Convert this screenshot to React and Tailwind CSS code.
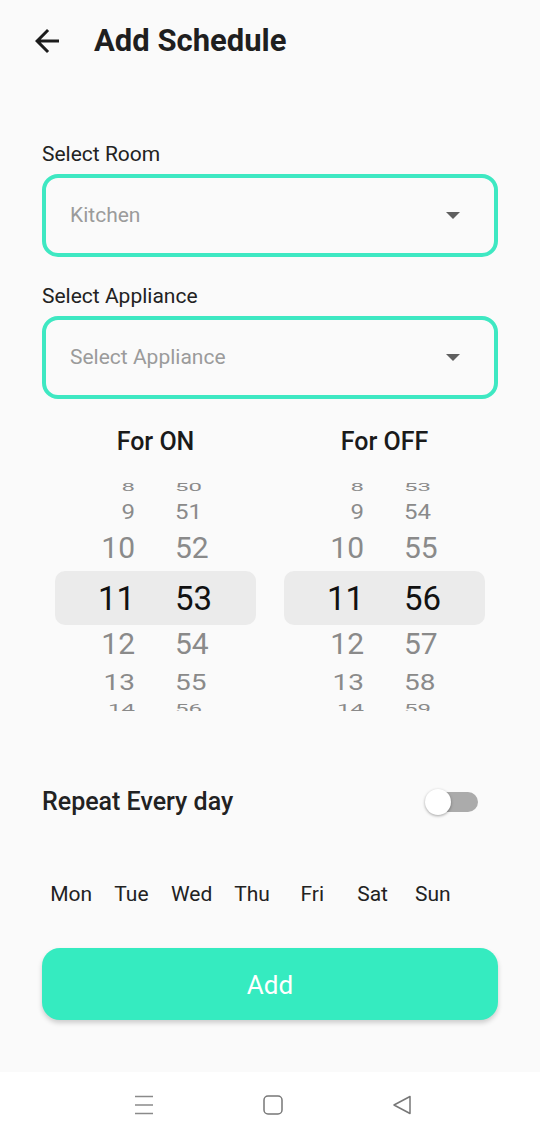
import React, { useState } from 'react';

const rows = [
  { h: 'h-[24px]', cls: 'text-[24px] scale-y-[0.47] text-[#8a8a8a]', hour: '8' },
  { h: 'h-[26px]', cls: 'text-[24px] scale-y-[0.88] text-[#8a8a8a]', hour: '9' },
  { h: 'h-[46px]', cls: 'text-[30px] text-[#8a8a8a]', hour: '10' },
  { h: 'h-[54px]', cls: 'text-[33px] text-[#111111]', hour: '11', selected: true },
  { h: 'h-[38px]', cls: 'text-[30px] text-[#8a8a8a]', hour: '12' },
  { h: 'h-[40px]', cls: 'text-[28px] scale-y-[0.8] text-[#8a8a8a]', hour: '13' },
  { h: 'h-[8px]', cls: 'text-[24px] scale-y-[0.5] origin-top text-[#8a8a8a]', hour: '14', clip: true },
];

function Wheel({ title, startMinute }) {
  return (
    <div className="w-[201px] flex flex-col">
      <div className="h-[32px] flex items-center justify-center text-[25px] font-medium text-[#1a1a1a]">
        {title}
      </div>
      <div className="mt-[17px] flex flex-col">
        {rows.map((r, i) => (
          <div
            key={i}
            className={`${r.h} flex ${r.clip ? 'items-start overflow-hidden' : 'items-center'} ${r.selected ? 'bg-[#ebebeb] rounded-[10px]' : ''}`}
          >
            <div className={`w-[80px] text-right leading-[1] ${r.cls}`}>{r.hour}</div>
            <div className={`ml-[40px] text-left leading-[1] ${r.cls}`}>{startMinute + i}</div>
          </div>
        ))}
      </div>
    </div>
  );
}

function Dropdown({ value }) {
  return (
    <div className="h-[83px] border-[4px] border-[#3ee8c2] rounded-[16px] flex items-center justify-between pl-[24px] pr-[34px]">
      <span className="text-[21px] text-[#9b9b9b]">{value}</span>
      <svg width="14" height="7" viewBox="0 0 14 7">
        <path d="M0 0 L14 0 L7 7 Z" fill="#5f5f5f" />
      </svg>
    </div>
  );
}

export default function App() {
  const [repeat, setRepeat] = useState(false);
  const days = ['Mon', 'Tue', 'Wed', 'Thu', 'Fri', 'Sat', 'Sun'];

  return (
    <div className="w-[540px] h-[1138px] bg-[#fafafa] flex flex-col" style={{ fontFamily: 'Roboto, "Noto Sans", sans-serif' }}>
      <div className="h-[1072px] flex flex-col">
        {/* header */}
        <div className="h-[82px] flex items-center pl-[29px]">
          <svg width="36" height="36" viewBox="0 0 24 24">
            <path d="M20 11H7.83l5.59-5.59L12 4l-8 8 8 8 1.41-1.41L7.83 13H20v-2z" fill="#1c1c1c" />
          </svg>
          <h1 className="ml-[29px] text-[31px] leading-[40px] font-bold text-[#1f1f1f]">Add Schedule</h1>
        </div>

        <div className="px-[42px] flex flex-col">
          <label className="mt-[60px] h-[26px] flex items-center text-[21px] text-[#222]">Select Room</label>
          <div className="mt-[6px]">
            <Dropdown value="Kitchen" />
          </div>
          <label className="mt-[27px] h-[26px] flex items-center text-[21px] text-[#222]">Select Appliance</label>
          <div className="mt-[6px]">
            <Dropdown value="Select Appliance" />
          </div>
        </div>

        <div className="mt-[27px] flex justify-center gap-[28px]">
          <Wheel title="For ON" startMinute={50} />
          <Wheel title="For OFF" startMinute={53} />
        </div>

        <div className="mt-[75px] px-[42px] h-[32px] flex items-center justify-between">
          <span className="text-[25px] font-medium text-[#222]">Repeat Every day</span>
          <button onClick={() => setRepeat(!repeat)} className="relative w-[53px] h-[28px] mr-[20px]">
            <span className="absolute left-[4px] right-0 top-[4px] h-[20px] rounded-full bg-[#ababab]" />
            <span
              className={`absolute top-px w-[26px] h-[26px] rounded-full bg-white shadow-[0_1px_3px_rgba(0,0,0,0.35)] ${repeat ? 'right-0' : 'left-0'}`}
            />
          </button>
        </div>

        <div className="mt-[61px] ml-[41px] w-[422px] grid grid-cols-7 h-[28px] items-center">
          {days.map((d) => (
            <span key={d} className="text-center text-[21px] text-[#222]">{d}</span>
          ))}
        </div>

        <div className="mt-[41px] px-[42px]">
          <button className="w-full h-[72px] pt-[3px] rounded-[18px] bg-[#35ebc0] shadow-[0_3px_5px_rgba(0,0,0,0.18)] text-white text-[26px]">
            Add
          </button>
        </div>
      </div>

      {/* system nav bar */}
      <div className="h-[66px] bg-white flex items-center justify-center gap-[109px] pl-[5px]">
        <svg width="20" height="20" viewBox="0 0 20 20">
          <path d="M1 1.5H19M1 10H19M1 18.5H19" stroke="#8a8a8a" strokeWidth="1.4" />
        </svg>
        <svg width="20" height="20" viewBox="0 0 20 20">
          <rect x="1" y="1" width="18" height="18" rx="4" fill="none" stroke="#777" strokeWidth="1.5" />
        </svg>
        <svg width="20" height="20" viewBox="0 0 20 20">
          <path d="M18 1.5 L2 10 L18 18.5 Z" fill="none" stroke="#777" strokeWidth="1.5" strokeLinejoin="round" />
        </svg>
      </div>
    </div>
  );
}
